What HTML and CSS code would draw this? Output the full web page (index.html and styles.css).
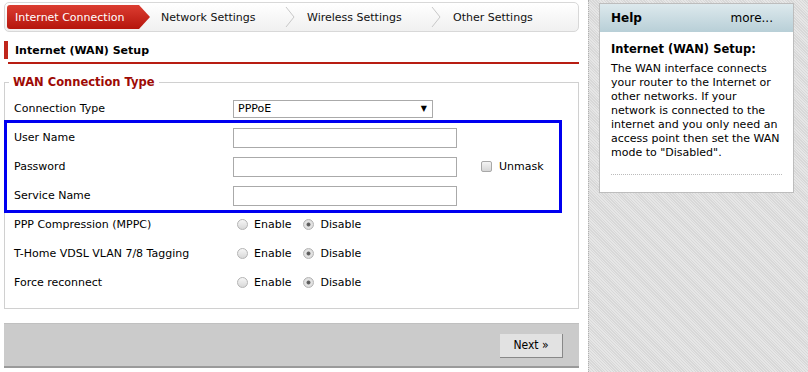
FILE: index.html
```html
<!DOCTYPE html>
<html lang="en">
<head>
    <meta charset="UTF-8">
    <title>Internet Connection</title>
    <link rel="stylesheet" href="styles.css">
</head>
<body>
    <div class="page">
        <div class="main">
            <div class="tabs">
                <div class="tab active">Internet Connection</div>
                <div class="tab">Network Settings
                    <svg class="chev" width="10" height="22" viewBox="0 0 10 22"><polyline points="1,1 9,11 1,21" fill="none" stroke="#c8c8c8" stroke-width="1"/></svg>
                </div>
                <div class="tab">Wireless Settings
                    <svg class="chev" width="10" height="22" viewBox="0 0 10 22"><polyline points="1,1 9,11 1,21" fill="none" stroke="#c8c8c8" stroke-width="1"/></svg>
                </div>
                <div class="tab last">Other Settings</div>
            </div>

            <h1 class="section-title">Internet (WAN) Setup</h1>

            <fieldset class="group">
                <legend>WAN Connection Type</legend>
                <div class="row">
                    <label class="lbl">Connection Type</label>
                    <div class="select-wrap">
                        <select class="select">
                            <option>PPPoE</option>
                        </select>
                    </div>
                </div>
                <div class="highlight">
                    <div class="row">
                        <label class="lbl">User Name</label>
                        <input type="text" class="text-input">
                    </div>
                    <div class="row">
                        <label class="lbl">Password</label>
                        <input type="password" class="text-input">
                        <label class="check"><input type="checkbox" class="box"> Unmask</label>
                    </div>
                    <div class="row">
                        <label class="lbl">Service Name</label>
                        <input type="text" class="text-input">
                    </div>
                </div>
                <div class="row">
                    <label class="lbl">PPP Compression (MPPC)</label>
                    <label class="radio"><input type="radio" name="mppc" class="dot"> Enable</label>
                    <label class="radio"><input type="radio" name="mppc" class="dot" checked> Disable</label>
                </div>
                <div class="row">
                    <label class="lbl">T-Home VDSL VLAN 7/8 Tagging</label>
                    <label class="radio"><input type="radio" name="vlan" class="dot"> Enable</label>
                    <label class="radio"><input type="radio" name="vlan" class="dot" checked> Disable</label>
                </div>
                <div class="row">
                    <label class="lbl">Force reconnect</label>
                    <label class="radio"><input type="radio" name="force" class="dot"> Enable</label>
                    <label class="radio"><input type="radio" name="force" class="dot" checked> Disable</label>
                </div>
            </fieldset>

            <div class="actions">
                <button type="button" class="next">Next &raquo;</button>
            </div>
        </div>

        <div class="sidebar">
            <div class="help">
                <div class="help-head">
                    <span class="help-title">Help</span>
                    <span class="help-more">more...</span>
                </div>
                <div class="help-body">
                    <h2>Internet (WAN) Setup:</h2>
                    <p>The WAN interface connects your router to the Internet or other networks. If your network is connected to the internet and you only need an access point then set the WAN mode to "Disabled".</p>
                </div>
            </div>
        </div>
    </div>
</body>
</html>
```

FILE: styles.css
```css
body {
    margin: 0;
    padding: 0;
    font-family: "DejaVu Sans", Verdana, sans-serif;
    font-size: 11px;
    color: #000;
    background: #fff;
}
.page {
    display: flex;
    height: 372px;
    overflow: hidden;
}
.main {
    width: 575px;
    padding: 2px 9px 0 4px;
}

/* tab strip */
.tabs {
    display: flex;
    align-items: center;
    height: 28px;
    padding: 0 2px;
    border: 1px solid #d8d8d8;
    border-radius: 5px;
    background: linear-gradient(#ffffff, #f0f0f0);
}
.tab {
    display: flex;
    flex-shrink: 0;
    align-items: center;
    justify-content: space-between;
    width: 135px;
    height: 24px;
    padding-left: 11px;
    color: #111;
}
.tab.last {
    flex: 1;
}
.tab .chev {
    margin-right: 1px;
}
.tab.active {
    width: 135px;
    padding-left: 8px;
    color: #fff;
    background: linear-gradient(#dc3d31, #b5150c);
    border-radius: 3px 0 0 3px;
    clip-path: polygon(0 0, 132px 0, 143px 50%, 132px 100%, 0 100%);
}

/* section heading */
.section-title {
    margin: 9px 0 0;
    height: 17px;
    padding: 1px 0 3px 7px;
    border-left: 4px solid #c0261b;
    border-bottom: 2px solid #b81d12;
    font-size: 11px;
    line-height: 17px;
    font-weight: bold;
    position: relative;
}
.section-title::after {
    content: "";
    position: absolute;
    left: -4px;
    bottom: -2px;
    width: 4px;
    height: 5px;
    background: #fff;
}

/* form group */
.group {
    margin: 11px 0 0;
    padding: 5px 0 11px;
    border: 1px solid #d0d0d0;
}
.group legend {
    margin-left: 4px;
    padding: 0 4px;
    color: #9e0a05;
    font-weight: bold;
    font-size: 11.5px;
    line-height: 14px;
}
.row {
    display: flex;
    align-items: center;
    height: 29px;
    padding-left: 9px;
}
.lbl {
    width: 219px;
}
.highlight {
    margin: 0 19px 0 2px;
    outline: 3px solid #0000f0;
}
.highlight .row {
    padding-left: 7px;
}

.select-wrap {
    position: relative;
    width: 200px;
}
.select-wrap::after {
    content: "\25BC";
    position: absolute;
    right: 6px;
    top: 4px;
    font-size: 8px;
    pointer-events: none;
}
.select {
    appearance: none;
    width: 200px;
    height: 18px;
    margin: 0;
    padding: 0 4px;
    border: 1px solid #aaa;
    border-radius: 0;
    background: #fff;
    font-family: inherit;
    font-size: 11px;
}
.text-input {
    width: 224px;
    height: 20px;
    margin: 0;
    padding: 0 3px;
    box-sizing: border-box;
    border: 1px solid #aaa;
    border-radius: 0;
    font-family: inherit;
    font-size: 11px;
}
.check {
    display: flex;
    align-items: center;
    gap: 7px;
    margin-left: 24px;
}
.box {
    appearance: none;
    width: 11px;
    height: 11px;
    margin: 0;
    border: 1px solid #a8a8a8;
    border-radius: 2px;
    background: linear-gradient(#f4f4f4, #d6d6d6);
}
.radio {
    display: flex;
    align-items: center;
    gap: 6px;
    margin-left: 4px;
    margin-right: 8px;
}
.dot {
    appearance: none;
    width: 11px;
    height: 11px;
    margin: 0;
    border: 1px solid #b4b4b4;
    border-radius: 50%;
    background: linear-gradient(#f6f6f6, #d8d8d8);
}
.dot:checked {
    background: radial-gradient(circle, #555 0, #666 1.6px, #e6e6e6 2.4px, #d4d4d4 100%);
}

/* bottom action bar */
.actions {
    display: flex;
    justify-content: flex-end;
    align-items: center;
    height: 42px;
    margin-top: 14px;
    padding-right: 16px;
    background: #cbcbcb;
    border-top: 1px solid #c0c0c0;
    border-bottom: 2px solid #9a9a9a;
}
.next {
    width: 63px;
    height: 24px;
    margin-top: 1px;
    padding: 0;
    border: none;
    border-right: 1px solid #888;
    border-bottom: 1px solid #888;
    background: #e2e2e2;
    font-family: "DejaVu Sans Condensed", "DejaVu Sans", sans-serif;
    font-size: 12px;
    color: #000;
    cursor: pointer;
}

/* help side column */
.sidebar {
    flex: 1;
    padding: 3px 0 0 10px;
    border-left: 1px dotted #b0b0b0;
    background: repeating-linear-gradient(45deg, #e6e6e6 0, #e6e6e6 1px, #d8d8d8 1px, #d8d8d8 2px);
}
.help {
    width: 193px;
    height: 188px;
    border: 1px solid #bdbdbd;
    background: #fff;
}
.help-head {
    display: flex;
    justify-content: space-between;
    align-items: center;
    height: 28px;
    padding: 0 20px 0 11px;
    background: linear-gradient(#dde9ed, #b8cfd7);
}
.help-title {
    font-weight: bold;
    font-size: 12px;
}
.help-more {
    font-size: 12px;
}
.help-body {
    margin: 0 11px;
    padding: 9px 0 14px;
    border-bottom: 1px dotted #bbb;
}
.help-body h2 {
    margin: 0 0 5px;
    font-size: 11.5px;
    font-weight: bold;
    line-height: 16px;
}
.help-body p {
    margin: 0;
    font-size: 11px;
    line-height: 14px;
}
```
